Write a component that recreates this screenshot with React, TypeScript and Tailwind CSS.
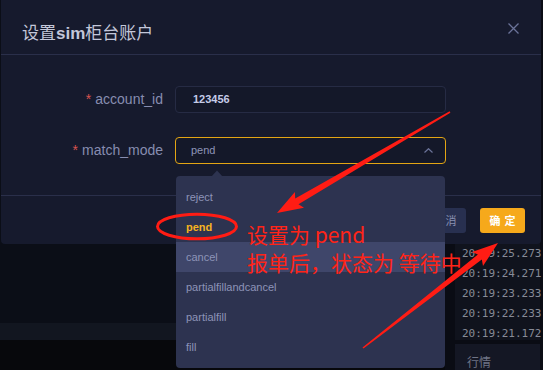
import React from "react";

type Pt = [number, number];

function arrowPoints(
  tail: Pt,
  tip: Pt,
  tailW: number,
  baseW: number,
  headLen: number,
  headW: number
): string {
  const dx = tip[0] - tail[0];
  const dy = tip[1] - tail[1];
  const len = Math.hypot(dx, dy);
  const ux = dx / len;
  const uy = dy / len;
  const nx = -uy;
  const ny = ux;
  const bx = tip[0] - ux * headLen;
  const by = tip[1] - uy * headLen;
  const pts: Pt[] = [
    [tail[0] + nx * tailW, tail[1] + ny * tailW],
    [bx + nx * baseW, by + ny * baseW],
    [bx + nx * headW - ux * 3, by + ny * headW - uy * 3],
    tip,
    [bx - nx * headW - ux * 3, by - ny * headW - uy * 3],
    [bx - nx * baseW, by - ny * baseW],
    [tail[0] - nx * tailW, tail[1] - ny * tailW],
  ];
  return pts.map((p) => p.map((v) => v.toFixed(1)).join(",")).join(" ");
}

const times = [
  "20:19:25.273",
  "20:19:24.271",
  "20:19:23.233",
  "20:19:22.233",
  "20:19:21.172",
];

const options = [
  "reject",
  "pend",
  "cancel",
  "partialfillandcancel",
  "partialfill",
  "fill",
];

export default function App() {
  return (
    <div className="relative w-[543px] h-[370px] overflow-hidden bg-[#07080c] font-['Liberation_Sans','Noto_Sans_CJK_SC',sans-serif]">
      {/* background page */}
      <div className="flex h-full">
        <div className="w-[445px] flex flex-col">
          <div className="h-[323px] bg-[#0b0e17]" />
          <div className="h-[17px] bg-[#121620]" />
          <div className="flex-1 bg-[#07080c]" />
        </div>
        <div className="w-[10px] bg-[#0a0c14]" />
        <div className="w-[88px] flex flex-col bg-[#0a0c14]">
          <div className="h-[340px] w-[85px] bg-[#10131d] pt-[244px] flex flex-col">
            {times.map((t) => (
              <div
                key={t}
                className="h-[20px] leading-[20px] pl-[7px] text-[11px] text-[#878b97] font-['DejaVu_Sans_Mono',monospace] whitespace-nowrap"
              >
                {t}
              </div>
            ))}
          </div>
          <div className="h-[8px]" />
          <div className="flex-1 w-[85px] bg-[#141724] pl-[12px] pt-[10px] text-[12px] leading-[16px] text-[#6f7486] font-['Noto_Sans_CJK_SC',sans-serif]">
            行情
          </div>
        </div>
      </div>

      {/* modal */}
      <div className="absolute left-[1px] top-0 w-[540px] h-[244px] bg-[#161a2d] rounded-b-[4px] flex flex-col">
        <div className="h-[55px] border-b border-[#2a2f4a] flex justify-between items-start pl-[21px] pr-[22px]">
          <div className="pt-[21px] leading-[22px] text-[17px] text-[#c3c7da] whitespace-nowrap">
            <span className="font-['Noto_Sans_CJK_SC',sans-serif]">设置</span>
            <span className="font-bold">sim</span>
            <span className="font-['Noto_Sans_CJK_SC',sans-serif]">柜台账户</span>
          </div>
          <svg width="11" height="11" viewBox="0 0 11 11" className="mt-[23px]">
            <path d="M0.5 0.5 L10.5 10.5 M10.5 0.5 L0.5 10.5" stroke="#6b7399" strokeWidth="1.3" fill="none" />
          </svg>
        </div>
        <div className="flex flex-col pt-[31px] pb-[31px] gap-[24px]">
          <div className="flex items-center h-[27px]">
            <div className="w-[162px] text-right text-[14px] text-[#878db0] whitespace-nowrap">
              <span className="text-[#d9534f] mr-[4px]">*</span>account_id
            </div>
            <div className="ml-[12px] w-[271px] h-[27px] rounded-[4px] border border-[#262b44] bg-[#141829] flex items-center pl-[17px] text-[11px] font-bold text-[#c5cbe8]">
              123456
            </div>
          </div>
          <div className="flex items-center h-[27px]">
            <div className="w-[162px] text-right text-[14px] text-[#878db0] whitespace-nowrap">
              <span className="text-[#d9534f] mr-[4px]">*</span>match_mode
            </div>
            <div className="ml-[12px] w-[271px] h-[27px] rounded-[4px] border border-[#e3a514] bg-[#141829] flex items-center justify-between pl-[15px] pr-[12px] text-[11px] text-[#8d94b8]">
              <span>pend</span>
              <svg width="9" height="5" viewBox="0 0 9 5">
                <path d="M0.5 4.5 L4.5 0.7 L8.5 4.5" stroke="#6b7399" strokeWidth="1.2" fill="none" />
              </svg>
            </div>
          </div>
        </div>
        <div className="flex-1 border-t border-[#2a2f4a] flex items-center justify-end pr-[16px] gap-[14px]">
          <div className="w-[45px] h-[25px] rounded-[3px] bg-[#283050] flex items-center justify-center gap-[4px] text-[11px] text-[#8a90b0] font-['Noto_Sans_CJK_SC',sans-serif]">
            <span>取</span>
            <span>消</span>
          </div>
          <div className="w-[45px] h-[25px] rounded-[3px] bg-[#f6a91b] flex items-center justify-center gap-[4px] text-[11px] font-bold text-white font-['Noto_Sans_CJK_SC',sans-serif]">
            <span>确</span>
            <span>定</span>
          </div>
        </div>
      </div>

      {/* dropdown */}
      <svg className="absolute left-[211px] top-[170px]" width="12" height="7" viewBox="0 0 12 7">
        <path d="M0 7 L6 0.5 L12 7 Z" fill="#2d3350" />
      </svg>
      <div className="absolute left-[176px] top-[176px] w-[269px] h-[192px] rounded-[4px] bg-[#2d3350] py-[6px] flex flex-col">
        {options.map((o) => (
          <div
            key={o}
            className={
              o === "cancel"
                ? "h-[30px] leading-[30px] pl-[10px] text-[11px] text-[#8d94b8] bg-[#3f466a]"
                : o === "pend"
                ? "h-[30px] leading-[30px] pl-[10px] text-[11px] font-bold text-[#f5b321]"
                : "h-[30px] leading-[30px] pl-[10px] text-[11px] text-[#8d94b8]"
            }
          >
            {o}
          </div>
        ))}
      </div>

      {/* annotations */}
      <svg className="absolute left-0 top-0 pointer-events-none" width="543" height="370" viewBox="0 0 543 370">
        <polygon points={arrowPoints([450, 112], [277, 213], 0.8, 3.2, 23, 9)} fill="#ff1c14" />
        <polygon points={arrowPoints([363, 348], [498, 243], 0.8, 3.2, 23, 9)} fill="#ff1c14" />
        <ellipse cx="197" cy="226.5" rx="39.5" ry="12.3" fill="none" stroke="#ff1c14" strokeWidth="3" />
      </svg>
      <div className="absolute left-[247px] top-[220px] text-[21px] leading-[28px] text-[#ff2418] font-['Noto_Sans_CJK_SC',sans-serif] whitespace-nowrap pointer-events-none">
        <div>设置为 pend</div>
        <div>报单后，状态为 等待中</div>
      </div>
    </div>
  );
}
